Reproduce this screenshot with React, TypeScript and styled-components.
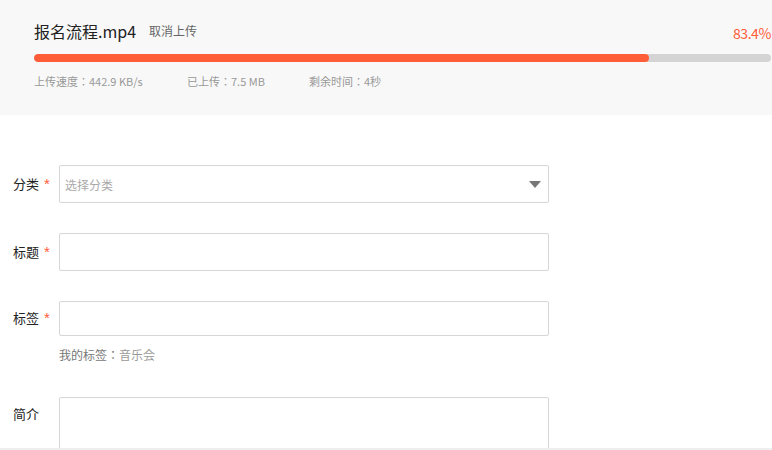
import React from 'react';
import styled, { createGlobalStyle } from 'styled-components';

const GlobalStyle = createGlobalStyle`
  html, body {
    margin: 0;
    padding: 0;
    background: #fff;
    font-family: "Noto Sans CJK SC", "Noto Sans", sans-serif;
    color: #333;
  }
`;

const Page = styled.div`
  width: 772px;
  height: 450px;
  display: flex;
  flex-direction: column;
  overflow: hidden;
`;

const UploadPanel = styled.section`
  height: 115px;
  flex-shrink: 0;
  background: #f8f8f8;
  padding: 19px 1px 0 34px;
  box-sizing: border-box;
`;

const TitleRow = styled.div`
  display: flex;
  align-items: flex-end;
  height: 24px;
`;

const FileName = styled.span`
  font-size: 16px;
  line-height: 24px;
  color: #222;
`;

const CancelLink = styled.a`
  font-size: 12px;
  line-height: 20px;
  color: #666;
  margin-left: 13px;
  margin-bottom: 2px;
  cursor: pointer;
`;

const Percent = styled.span`
  margin-left: auto;
  font-size: 14px;
  line-height: 20px;
  color: #ff5c38;
  letter-spacing: -0.4px;
`;

const Track = styled.div`
  margin-top: 11px;
  height: 8px;
  border-radius: 4px;
  background: #d4d4d4;
  overflow: hidden;
`;

const Fill = styled.div`
  height: 100%;
  border-radius: 4px;
  background: #ff5c38;
`;

// JP face keeps the full-width colon centred, as in the screenshot
const Stats = styled.div`
  display: flex;
  margin-top: 11px;
  font-family: "Noto Sans CJK JP", "Noto Sans CJK SC", sans-serif;
  font-size: 11px;
  line-height: 16px;
  color: #999;
`;

const Stat = styled.span<{ $w?: number }>`
  width: ${(p) => (p.$w ? `${p.$w}px` : 'auto')};
`;

const FormArea = styled.div`
  flex: 1;
  overflow: hidden;
  padding-top: 50px;
  box-sizing: border-box;
`;

const Row = styled.div<{ $gap?: number; $top?: boolean }>`
  display: flex;
  align-items: ${(p) => (p.$top ? 'flex-start' : 'center')};
  margin-bottom: ${(p) => p.$gap ?? 30}px;
`;

const Label = styled.label<{ $pad?: number }>`
  width: 46px;
  padding-left: 13px;
  box-sizing: border-box;
  flex-shrink: 0;
  font-size: 13px;
  line-height: 18px;
  color: #222;
  white-space: nowrap;
  padding-top: ${(p) => p.$pad ?? 0}px;
`;

const Star = styled.span`
  color: #ff5c38;
  margin-left: 5px;
  font-family: "Liberation Sans", sans-serif;
  font-size: 15px;
  line-height: 18px;
  vertical-align: top;
`;

const Field = styled.div`
  width: 490px;
  margin-left: 13px;
`;

const Box = styled.div<{ $h: number }>`
  position: relative;
  height: ${(p) => p.$h}px;
  border: 1px solid #d6d6d6;
  border-radius: 2px;
  background: #fff;
  box-sizing: border-box;
  display: flex;
  align-items: center;
  padding-left: 5px;
`;

const Placeholder = styled.span`
  font-size: 12px;
  color: #aaa;
`;

const Caret = styled.span`
  margin-left: auto;
  margin-right: 7px;
  width: 0;
  height: 0;
  border-left: 6px solid transparent;
  border-right: 6px solid transparent;
  border-top: 7px solid #777;
`;

const Hint = styled.div`
  margin-top: 11px;
  font-family: "Noto Sans CJK JP", "Noto Sans CJK SC", sans-serif;
  font-size: 12px;
  line-height: 16px;
  color: #777;
`;

const HintValue = styled.span`
  color: #999;
`;

const Footer = styled.div`
  height: 2px;
  flex-shrink: 0;
  background: #efefef;
`;

export default function App() {
  const progress = 83.4;
  return (
    <>
      <GlobalStyle />
      <Page>
        <UploadPanel>
          <TitleRow>
            <FileName>报名流程.mp4</FileName>
            <CancelLink>取消上传</CancelLink>
            <Percent>{progress}%</Percent>
          </TitleRow>
          <Track>
            <Fill style={{ width: `${progress}%` }} />
          </Track>
          <Stats>
            <Stat $w={153}>上传速度：442.9 KB/s</Stat>
            <Stat $w={122}>已上传：7.5 MB</Stat>
            <Stat>剩余时间：4秒</Stat>
          </Stats>
        </UploadPanel>
        <FormArea>
          <Row>
            <Label>
              分类<Star>*</Star>
            </Label>
            <Field>
              <Box $h={38}>
                <Placeholder>选择分类</Placeholder>
                <Caret />
              </Box>
            </Field>
          </Row>
          <Row>
            <Label>
              标题<Star>*</Star>
            </Label>
            <Field>
              <Box $h={38} />
            </Field>
          </Row>
          <Row $top $gap={34}>
            <Label $pad={8}>
              标签<Star>*</Star>
            </Label>
            <Field>
              <Box $h={35} />
              <Hint>
                我的标签：<HintValue>音乐会</HintValue>
              </Hint>
            </Field>
          </Row>
          <Row $top>
            <Label $pad={8}>简介</Label>
            <Field>
              <Box $h={100} />
            </Field>
          </Row>
        </FormArea>
        <Footer />
      </Page>
    </>
  );
}
